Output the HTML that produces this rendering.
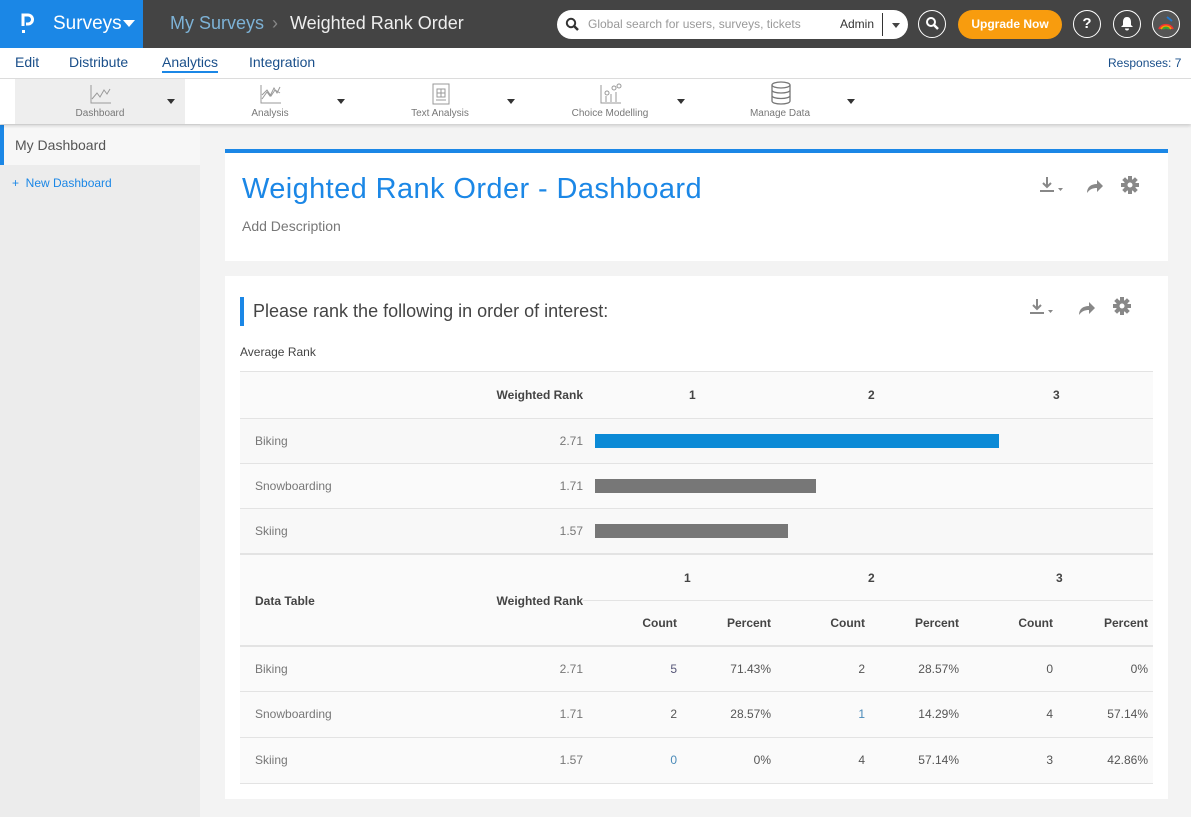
<!DOCTYPE html>
<html><head><meta charset="utf-8"><style>
*{box-sizing:border-box;margin:0;padding:0}
body{width:1191px;height:817px;overflow:hidden;background:#f3f3f3;font-family:"Liberation Sans",sans-serif;position:relative;color:#555}
.abs{position:absolute}
#top{left:0;top:0;width:1191px;height:48px;background:#444}
#brand{left:0;top:0;width:143px;height:48px;background:#1b87e6;color:#fff;font-size:19px}
#nav{left:0;top:48px;width:1191px;height:31px;background:#fff;border-bottom:1px solid #ddd}
#nav span{position:absolute;top:6px;font-size:14px;color:#1a4f8a}
#tb{left:0;top:79px;width:1191px;height:45px;background:#fff;box-shadow:0 2px 3px rgba(0,0,0,.15);z-index:2}
.tab{position:absolute;top:0;height:45px;width:170px;font-size:10px;color:#777;text-align:center}
.tab .lbl{position:absolute;top:29px;left:0;width:170px}
.tab .car{position:absolute;right:10px;top:20px;border:4px solid transparent;border-top:5px solid #333}
.tab svg{position:absolute;top:4px;left:74px}
#side{left:0;top:124px;width:200px;height:693px;background:#ececec}
.card{background:#fff;left:225px;width:943px}
.tbl{left:240px;width:913px;background:#fafafa}
.r{position:absolute;left:0;width:913px;border-top:1px solid #e3e3e3;font-size:12px}
.r span{position:absolute}
.b{font-weight:bold;color:#444}
</style></head><body>
<div id="top" class="abs"></div>
<div id="brand" class="abs">
 <svg class="abs" style="left:20px;top:12px" width="16" height="24"><path d="M3 14V3h5a4.5 4.5 0 0 1 0 9H6" stroke="#fff" stroke-width="3" fill="none"/><rect x="2" y="18" width="3" height="3" fill="#fff"/></svg>
 <div class="abs" style="left:53px;top:13px">Surveys</div>
 <div class="abs" style="left:123px;top:20px;border:6px solid transparent;border-top:7px solid #fff"></div>
</div>
<div class="abs" style="left:170px;top:13px;font-size:18px;color:#7db2d6">My Surveys</div>
<div class="abs" style="left:272px;top:13px;font-size:18px;color:#888">›</div>
<div class="abs" style="left:290px;top:13px;font-size:18px;color:#eee">Weighted Rank Order</div>
<div class="abs" style="left:557px;top:10px;width:351px;height:29px;background:#fff;border-radius:15px">
 <svg class="abs" style="left:8px;top:7px" width="15" height="15"><circle cx="6" cy="6" r="4.2" stroke="#333" stroke-width="2" fill="none"/><path d="M9 9l4 4" stroke="#333" stroke-width="2.5"/></svg>
 <div class="abs" style="left:31px;top:7px;font-size:12px;color:#999">Global search for users, surveys, tickets</div>
 <div class="abs" style="left:283px;top:7px;font-size:12px;color:#333">Admin</div>
 <div class="abs" style="left:325px;top:3px;width:1px;height:23px;background:#333"></div>
 <div class="abs" style="left:335px;top:13px;border:4px solid transparent;border-top:5px solid #444"></div>
</div>
<div class="abs" style="left:918px;top:10px;width:28px;height:28px;border:1.5px solid #fff;border-radius:50%"><svg class="abs" style="left:6px;top:5px" width="15" height="15"><circle cx="6" cy="6" r="4" stroke="#fff" stroke-width="2" fill="none"/><path d="M9 9l4 4" stroke="#fff" stroke-width="2.5"/></svg></div>
<div class="abs" style="left:958px;top:10px;width:104px;height:29px;background:#f89c0e;border-radius:15px;color:#fff;font-size:12px;font-weight:bold;text-align:center;line-height:29px">Upgrade Now</div>
<div class="abs" style="left:1073px;top:10px;width:28px;height:28px;border:1.5px solid #fff;border-radius:50%;color:#fff;font-weight:bold;font-size:15px;text-align:center;line-height:25px">?</div>
<div class="abs" style="left:1113px;top:10px;width:28px;height:28px;border:1.5px solid #fff;border-radius:50%"><svg class="abs" style="left:6px;top:5px" width="14" height="15"><path d="M7 1c-3 0-4 2.5-4 5v3l-2 2h12l-2-2V6c0-2.5-1-5-4-5zM5 12.5a2 2 0 0 0 4 0z" fill="#fff"/></svg></div>
<div class="abs" style="left:1152px;top:10px;width:28px;height:28px;border:1.5px solid #fff;border-radius:50%;background:#555;overflow:hidden"><svg width="26" height="26"><path d="M6 18a8 8 0 0 1 14 0" stroke="#e33" stroke-width="2" fill="none"/><path d="M8 18a6 6 0 0 1 10 0" stroke="#f90" stroke-width="2" fill="none"/><path d="M10 18a4 4 0 0 1 6 0" stroke="#3a3" stroke-width="2" fill="none"/><path d="M14 6l5 4" stroke="#27c" stroke-width="2"/></svg></div>

<div id="nav" class="abs">
 <span style="left:15px">Edit</span><span style="left:69px">Distribute</span>
 <span style="left:162px;border-bottom:2px solid #1b87e6;padding-bottom:1px">Analytics</span><span style="left:249px">Integration</span>
 <span style="left:1108px;top:8px;font-size:12px">Responses: 7</span>
</div>
<div id="tb" class="abs">
 <div class="tab" style="left:15px;background:#eee"><svg width="24" height="22"><path d="M2 2v18h20" stroke="#999" fill="none"/><path d="M3 16l5-6 3 4 4-7 3 4 3-5" stroke="#999" fill="none"/></svg><div class="lbl">Dashboard</div><div class="car"></div></div>
 <div class="tab" style="left:185px"><svg width="24" height="22"><path d="M2 2v18h20" stroke="#999" fill="none"/><path d="M3 16l5-7 3 4 4-8 3 5 3-6M3 12l5-5 4 6 4-6 5 3" stroke="#999" fill="none"/></svg><div class="lbl">Analysis</div><div class="car"></div></div>
 <div class="tab" style="left:355px"><svg width="24" height="22"><rect x="4" y="1" width="16" height="20" stroke="#999" fill="none"/><rect x="8" y="6" width="8" height="8" stroke="#999" fill="none"/><path d="M12 6v8M8 10h8M7 17h10" stroke="#999"/></svg><div class="lbl">Text Analysis</div><div class="car"></div></div>
 <div class="tab" style="left:525px"><svg width="24" height="22"><path d="M2 2v18h20" stroke="#999" fill="none"/><path d="M7 19v-6M12 19v-8M17 19v-10" stroke="#999"/><circle cx="8" cy="10" r="2" stroke="#999" fill="none"/><circle cx="15" cy="5" r="2" stroke="#999" fill="none"/><circle cx="20" cy="3" r="2" stroke="#999" fill="none"/></svg><div class="lbl">Choice Modelling</div><div class="car"></div></div>
 <div class="tab" style="left:695px"><svg width="24" height="24" style="top:2px"><ellipse cx="12" cy="4" rx="9" ry="3" stroke="#777" fill="none" stroke-width="1.3"/><path d="M3 4v16c0 4 18 4 18 0V4M3 9c0 4 18 4 18 0M3 14.5c0 4 18 4 18 0" stroke="#777" fill="none" stroke-width="1.3"/></svg><div class="lbl">Manage Data</div><div class="car"></div></div>
</div>

<div id="side" class="abs">
 <div class="abs" style="left:0;top:1px;width:200px;height:40px;background:#f7f7f7;border-left:4px solid #1b87e6"></div>
 <div class="abs" style="left:15px;top:13px;font-size:14px;color:#555">My Dashboard</div>
 <div class="abs" style="left:12px;top:52px;font-size:12px;color:#1b87e6">+&nbsp; New Dashboard</div>
</div>

<div class="abs card" style="top:149px;height:112px;border-top:4px solid #1b87e6">
 <div class="abs" style="left:17px;top:20px;font-size:29px;color:#1b87e6;letter-spacing:0.4px">Weighted Rank Order - Dashboard</div>
 <div class="abs" style="left:17px;top:65px;font-size:14px;color:#777">Add Description</div>
 <svg class="abs" style="left:814px;top:23px" width="26" height="18"><path d="M8 1v10M4 7l4 4 4-4M1 15h14" stroke="#888" stroke-width="2" fill="none"/><path d="M19 12h5l-2.5 3z" fill="#888"/></svg>
 <svg class="abs" style="left:860px;top:25px" width="18" height="15"><path d="M2 15c0-6 4-9 10-9V2l6 6-6 6V10c-4 0-7 1-10 5z" fill="#888"/></svg>
 <svg class="abs" style="left:896px;top:23px" width="18" height="18" viewBox="0 0 18 18"><g fill="#888"><circle cx="9" cy="9" r="6"/><rect x="7" y="0" width="4" height="18"/><rect x="0" y="7" width="18" height="4"/><rect x="7" y="0" width="4" height="18" transform="rotate(45 9 9)"/><rect x="7" y="0" width="4" height="18" transform="rotate(-45 9 9)"/></g><circle cx="9" cy="9" r="2.5" fill="#fff"/></svg>
</div>

<div class="abs card" style="top:276px;height:523px">
 <div class="abs" style="left:15px;top:21px;width:4px;height:29px;background:#1b87e6"></div>
 <div class="abs" style="left:28px;top:25px;font-size:18px;color:#444">Please rank the following in order of interest:</div>
 <svg class="abs" style="left:804px;top:22px" width="26" height="18"><path d="M8 1v10M4 7l4 4 4-4M1 15h14" stroke="#888" stroke-width="2" fill="none"/><path d="M19 12h5l-2.5 3z" fill="#888"/></svg>
 <svg class="abs" style="left:852px;top:24px" width="18" height="15"><path d="M2 15c0-6 4-9 10-9V2l6 6-6 6V10c-4 0-7 1-10 5z" fill="#888"/></svg>
 <svg class="abs" style="left:888px;top:21px" width="18" height="18" viewBox="0 0 18 18"><g fill="#888"><circle cx="9" cy="9" r="6"/><rect x="7" y="0" width="4" height="18"/><rect x="0" y="7" width="18" height="4"/><rect x="7" y="0" width="4" height="18" transform="rotate(45 9 9)"/><rect x="7" y="0" width="4" height="18" transform="rotate(-45 9 9)"/></g><circle cx="9" cy="9" r="2.5" fill="#fff"/></svg>
 <div class="abs" style="left:15px;top:69px;font-size:12px;color:#444">Average Rank</div>
</div>

<div class="abs tbl" style="top:371px;height:413px;border-bottom:1px solid #e3e3e3">
 <div class="r" style="top:0;height:47px"><span class="b" style="right:570px;top:16px">Weighted Rank</span><span class="b" style="left:449px;top:16px">1</span><span class="b" style="left:628px;top:16px">2</span><span class="b" style="left:813px;top:16px">3</span></div>
 <div class="r" style="top:47px;height:45px;background:#f8f8f8"><span style="left:15px;top:15px;color:#777">Biking</span><span style="right:570px;top:15px;color:#777">2.71</span><span style="left:355px;top:15px;width:404px;height:14px;background:#0b8ad6"></span></div>
 <div class="r" style="top:92px;height:45px"><span style="left:15px;top:15px;color:#777">Snowboarding</span><span style="right:570px;top:15px;color:#777">1.71</span><span style="left:355px;top:15px;width:221px;height:14px;background:#777"></span></div>
 <div class="r" style="top:137px;height:45px;background:#f8f8f8"><span style="left:15px;top:15px;color:#777">Skiing</span><span style="right:570px;top:15px;color:#777">1.57</span><span style="left:355px;top:15px;width:193px;height:14px;background:#777"></span></div>
 <div class="r" style="top:182px;height:92px;border-top:2px solid #e3e3e3">
  <span class="b" style="left:15px;top:39px">Data Table</span><span class="b" style="right:570px;top:39px">Weighted Rank</span>
  <span class="b" style="left:444px;top:16px">1</span><span class="b" style="left:628px;top:16px">2</span><span class="b" style="left:816px;top:16px">3</span>
  <span style="left:343px;top:45px;width:570px;border-top:1px solid #e3e3e3"></span>
  <span class="b" style="right:476px;top:61px">Count</span><span class="b" style="right:382px;top:61px">Percent</span>
  <span class="b" style="right:288px;top:61px">Count</span><span class="b" style="right:194px;top:61px">Percent</span>
  <span class="b" style="right:100px;top:61px">Count</span><span class="b" style="right:5px;top:61px">Percent</span>
 </div>
 <div class="r" style="top:274px;height:46px;border-top:2px solid #e3e3e3"><span style="left:15px;top:15px;color:#777">Biking</span><span style="right:570px;top:15px;color:#777">2.71</span><span style="right:476px;top:15px;color:#557">5</span><span style="right:382px;top:15px">71.43%</span><span style="right:288px;top:15px">2</span><span style="right:194px;top:15px">28.57%</span><span style="right:100px;top:15px">0</span><span style="right:5px;top:15px">0%</span></div>
 <div class="r" style="top:320px;height:46px"><span style="left:15px;top:15px;color:#777">Snowboarding</span><span style="right:570px;top:15px;color:#777">1.71</span><span style="right:476px;top:15px">2</span><span style="right:382px;top:15px">28.57%</span><span style="right:288px;top:15px;color:#4a8ab8">1</span><span style="right:194px;top:15px">14.29%</span><span style="right:100px;top:15px">4</span><span style="right:5px;top:15px">57.14%</span></div>
 <div class="r" style="top:366px;height:46px"><span style="left:15px;top:15px;color:#777">Skiing</span><span style="right:570px;top:15px;color:#777">1.57</span><span style="right:476px;top:15px;color:#4a8ab8">0</span><span style="right:382px;top:15px">0%</span><span style="right:288px;top:15px">4</span><span style="right:194px;top:15px">57.14%</span><span style="right:100px;top:15px">3</span><span style="right:5px;top:15px">42.86%</span></div>
</div>
</body></html>
